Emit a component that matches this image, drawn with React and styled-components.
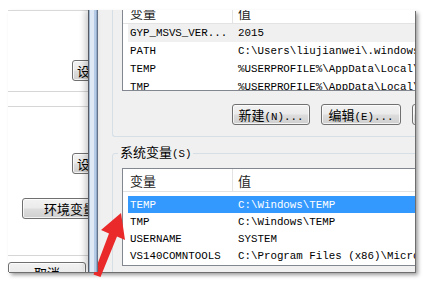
import styled, { createGlobalStyle } from "styled-components";

const CJK = `"Noto Sans CJK SC", "Noto Sans", sans-serif`;
const MONO = `"Liberation Mono", "Noto Sans CJK SC", monospace`;

const GlobalStyle = createGlobalStyle`
  html, body {
    margin: 0;
    background: #fff;
  }
  body {
    font-family: ${CJK};
  }
`;

const Page = styled.div`
  position: relative;
  width: 427px;
  height: 283px;
  padding: 10px 0 0 8px;
  box-sizing: border-box;
  overflow: hidden;
`;

const Shot = styled.div`
  display: flex;
  width: 407px;
  height: 262px;
  overflow: hidden;
  box-shadow: 1px 1px 0 #6e6e6e, 3px 3px 4px rgba(0, 0, 0, 0.4);
`;

// left window (system properties), mostly hidden behind the dialog
const SettingsPane = styled.div`
  width: 80px;
  flex-shrink: 0;
  display: flex;
  flex-direction: column;
  align-items: flex-start;
  background: #fff;
  border-top: 1px solid #d9d9d9;
  box-sizing: border-box;
  overflow: hidden;
`;

const PaneDivider = styled.div`
  flex-shrink: 0;
  width: 100%;
  height: 16px;
  margin-top: 10px;
  box-sizing: border-box;
  border-top: 1px solid #d6d6d6;
  border-bottom: 1px solid #d6d6d6;
`;

const PaneRule = styled.div`
  flex-shrink: 0;
  width: 100%;
  height: 1px;
  margin-top: 36px;
  background: #d6d6d6;
`;

const WinButton = styled.button`
  flex-shrink: 0;
  box-sizing: border-box;
  height: 21px;
  width: ${(p) => p.$w}px;
  margin: ${(p) => p.$top || 0}px 0 0 ${(p) => p.$left || 0}px;
  padding: 0 0 0 ${(p) => p.$pad || 0}px;
  border: 1px solid #707070;
  border-radius: 3px;
  background: linear-gradient(#f2f2f2, #ebebeb 48%, #dddddd 52%, #cfcfcf);
  box-shadow: inset 0 0 0 1px rgba(255, 255, 255, 0.75);
  font: 13px/19px ${CJK};
  color: #000;
  text-align: ${(p) => (p.$pad ? "left" : "center")};
  white-space: nowrap;
  overflow: hidden;
`;

const Mono = styled.span`
  font-family: ${MONO};
  font-size: 10.8px;
`;

const FrameEdge = styled.div`
  position: relative;
  z-index: 1;
  width: 10px;
  flex-shrink: 0;
  background: linear-gradient(
    to right,
    #535a63 0 1px,
    #9fb5ce 1px 2px,
    #dfe9f5 2px 6px,
    #b6cce6 6px 8px,
    #93abc8 8px 9px,
    #63748a 9px
  );
  box-shadow: -3px 0 6px rgba(0, 0, 0, 0.2);
`;

// environment variables dialog
const EnvDialog = styled.div`
  flex: 1;
  min-width: 0;
  display: flex;
  flex-direction: column;
  align-items: flex-start;
  padding-left: 14px;
  background: #f0f0f0;
  overflow: hidden;
`;

const UserGroup = styled.div`
  flex-shrink: 0;
  width: 400px;
  margin-top: -9px;
  padding: 0 0 11px 9px;
  display: flex;
  flex-direction: column;
  align-items: flex-start;
  border-left: 1px solid #d5dfe5;
  border-bottom: 1px solid #d5dfe5;
  border-bottom-left-radius: 3px;
`;

const SystemGroup = styled.fieldset`
  flex-shrink: 0;
  width: 400px;
  height: 200px;
  min-width: 0;
  margin: 6px 0 0 0;
  padding: 5px 0 0 0;
  box-sizing: border-box;
  border: 1px solid #d5dfe5;
  border-radius: 3px;
`;

const Legend = styled.legend`
  margin-left: 5px;
  padding: 0 2px;
  font: 13px/18px ${CJK};
  color: #000;
`;

const GroupInner = styled.div`
  padding-left: 9px;
`;

const VarList = styled.div`
  flex-shrink: 0;
  box-sizing: border-box;
  width: 380px;
  height: ${(p) => p.$h}px;
  border: 1px solid #828790;
  background: #fff;
  overflow: hidden;
`;

const ListHeader = styled.div`
  display: grid;
  grid-template-columns: 110px 1fr;
  height: ${(p) => p.$h}px;
  box-sizing: border-box;
  border-bottom: 1px solid #e3e3e3;
  font: 13px ${CJK};
  color: #1e1e1e;
`;

const HeadCell = styled.div`
  display: flex;
  align-items: center;
  padding-left: ${(p) => p.$pl}px;
  border-right: ${(p) => (p.$divider ? "1px solid #e3e3e3" : "none")};
`;

const ListBody = styled.div`
  padding-top: ${(p) => p.$pt || 0}px;
`;

const Row = styled.div`
  display: grid;
  grid-template-columns: 105px 1fr;
  align-items: center;
  height: ${(p) => p.$h}px;
  margin-left: 5px;
  font: 10.8px ${MONO};
  white-space: nowrap;
  background: ${(p) => (p.$selected ? "#3399ff" : p.$hover ? "#f0f0f0" : "transparent")};
  color: ${(p) => (p.$selected ? "#fff" : "#000")};
`;

const Cell = styled.span`
  padding-left: ${(p) => p.$pl}px;
  overflow: hidden;
`;

const ButtonRow = styled.div`
  display: flex;
  gap: 11px;
  margin-top: 13px;
  padding-left: 110px;
`;

const Pointer = styled.svg`
  position: absolute;
  left: 0;
  top: 0;
  pointer-events: none;
`;

const userVars = [
  ["GYP_MSVS_VER...", "2015"],
  ["PATH", "C:\\Users\\liujianwei\\.windows-build-tools\\python27\\"],
  ["TEMP", "%USERPROFILE%\\AppData\\Local\\Temp"],
  ["TMP", "%USERPROFILE%\\AppData\\Local\\Temp"],
];

const systemVars = [
  ["TEMP", "C:\\Windows\\TEMP"],
  ["TMP", "C:\\Windows\\TEMP"],
  ["USERNAME", "SYSTEM"],
  ["VS140COMNTOOLS", "C:\\Program Files (x86)\\Microsoft Visual Studio 14.0\\Common7\\Tools\\"],
];

const Header = ({ h }) => (
  <ListHeader $h={h}>
    <HeadCell $pl={7} $divider>变量</HeadCell>
    <HeadCell $pl={5}>值</HeadCell>
  </ListHeader>
);

export default function App() {
  return (
    <Page>
      <GlobalStyle />
      <Shot>
        <SettingsPane>
          <WinButton $w={80} $top={49} $left={64} $pad={4}>设置(S)...</WinButton>
          <PaneDivider />
          <WinButton $w={80} $top={46} $left={64} $pad={4}>设置(E)...</WinButton>
          <WinButton $w={110} $top={24} $left={14} $pad={21}>
            环境变量<Mono>(N)...</Mono>
          </WinButton>
          <PaneRule />
          <WinButton $w={78} $top={6}>取消</WinButton>
        </SettingsPane>
        <FrameEdge />
        <EnvDialog>
          <UserGroup>
            <VarList $h={90}>
              <Header h={22} />
              <ListBody>
                {userVars.map(([name, value], i) => (
                  <Row key={name} $h={18} $hover={i === 0}>
                    <Cell $pl={2}>{name}</Cell>
                    <Cell $pl={5}>{value}</Cell>
                  </Row>
                ))}
              </ListBody>
            </VarList>
            <ButtonRow>
              <WinButton $w={78}>
                新建<Mono>(N)...</Mono>
              </WinButton>
              <WinButton $w={80}>
                编辑<Mono>(E)...</Mono>
              </WinButton>
              <WinButton $w={78}>
                删除<Mono>(D)</Mono>
              </WinButton>
            </ButtonRow>
          </UserGroup>
          <SystemGroup>
            <Legend>
              系统变量<Mono>(S)</Mono>
            </Legend>
            <GroupInner>
              <VarList $h={98}>
                <Header h={23} />
                <ListBody $pt={4}>
                  {systemVars.map(([name, value], i) => (
                    <Row key={name} $h={17} $selected={i === 0}>
                      <Cell $pl={2}>{name}</Cell>
                      <Cell $pl={5}>{value}</Cell>
                    </Row>
                  ))}
                </ListBody>
              </VarList>
            </GroupInner>
          </SystemGroup>
        </EnvDialog>
      </Shot>
      <Pointer width="427" height="283" viewBox="0 0 427 283">
        <polygon
          points="121,213 125,240 117,236.5 100.5,277 93.5,274.5 109,233.5 101,230"
          fill="#ea2a2a"
        />
      </Pointer>
    </Page>
  );
}
